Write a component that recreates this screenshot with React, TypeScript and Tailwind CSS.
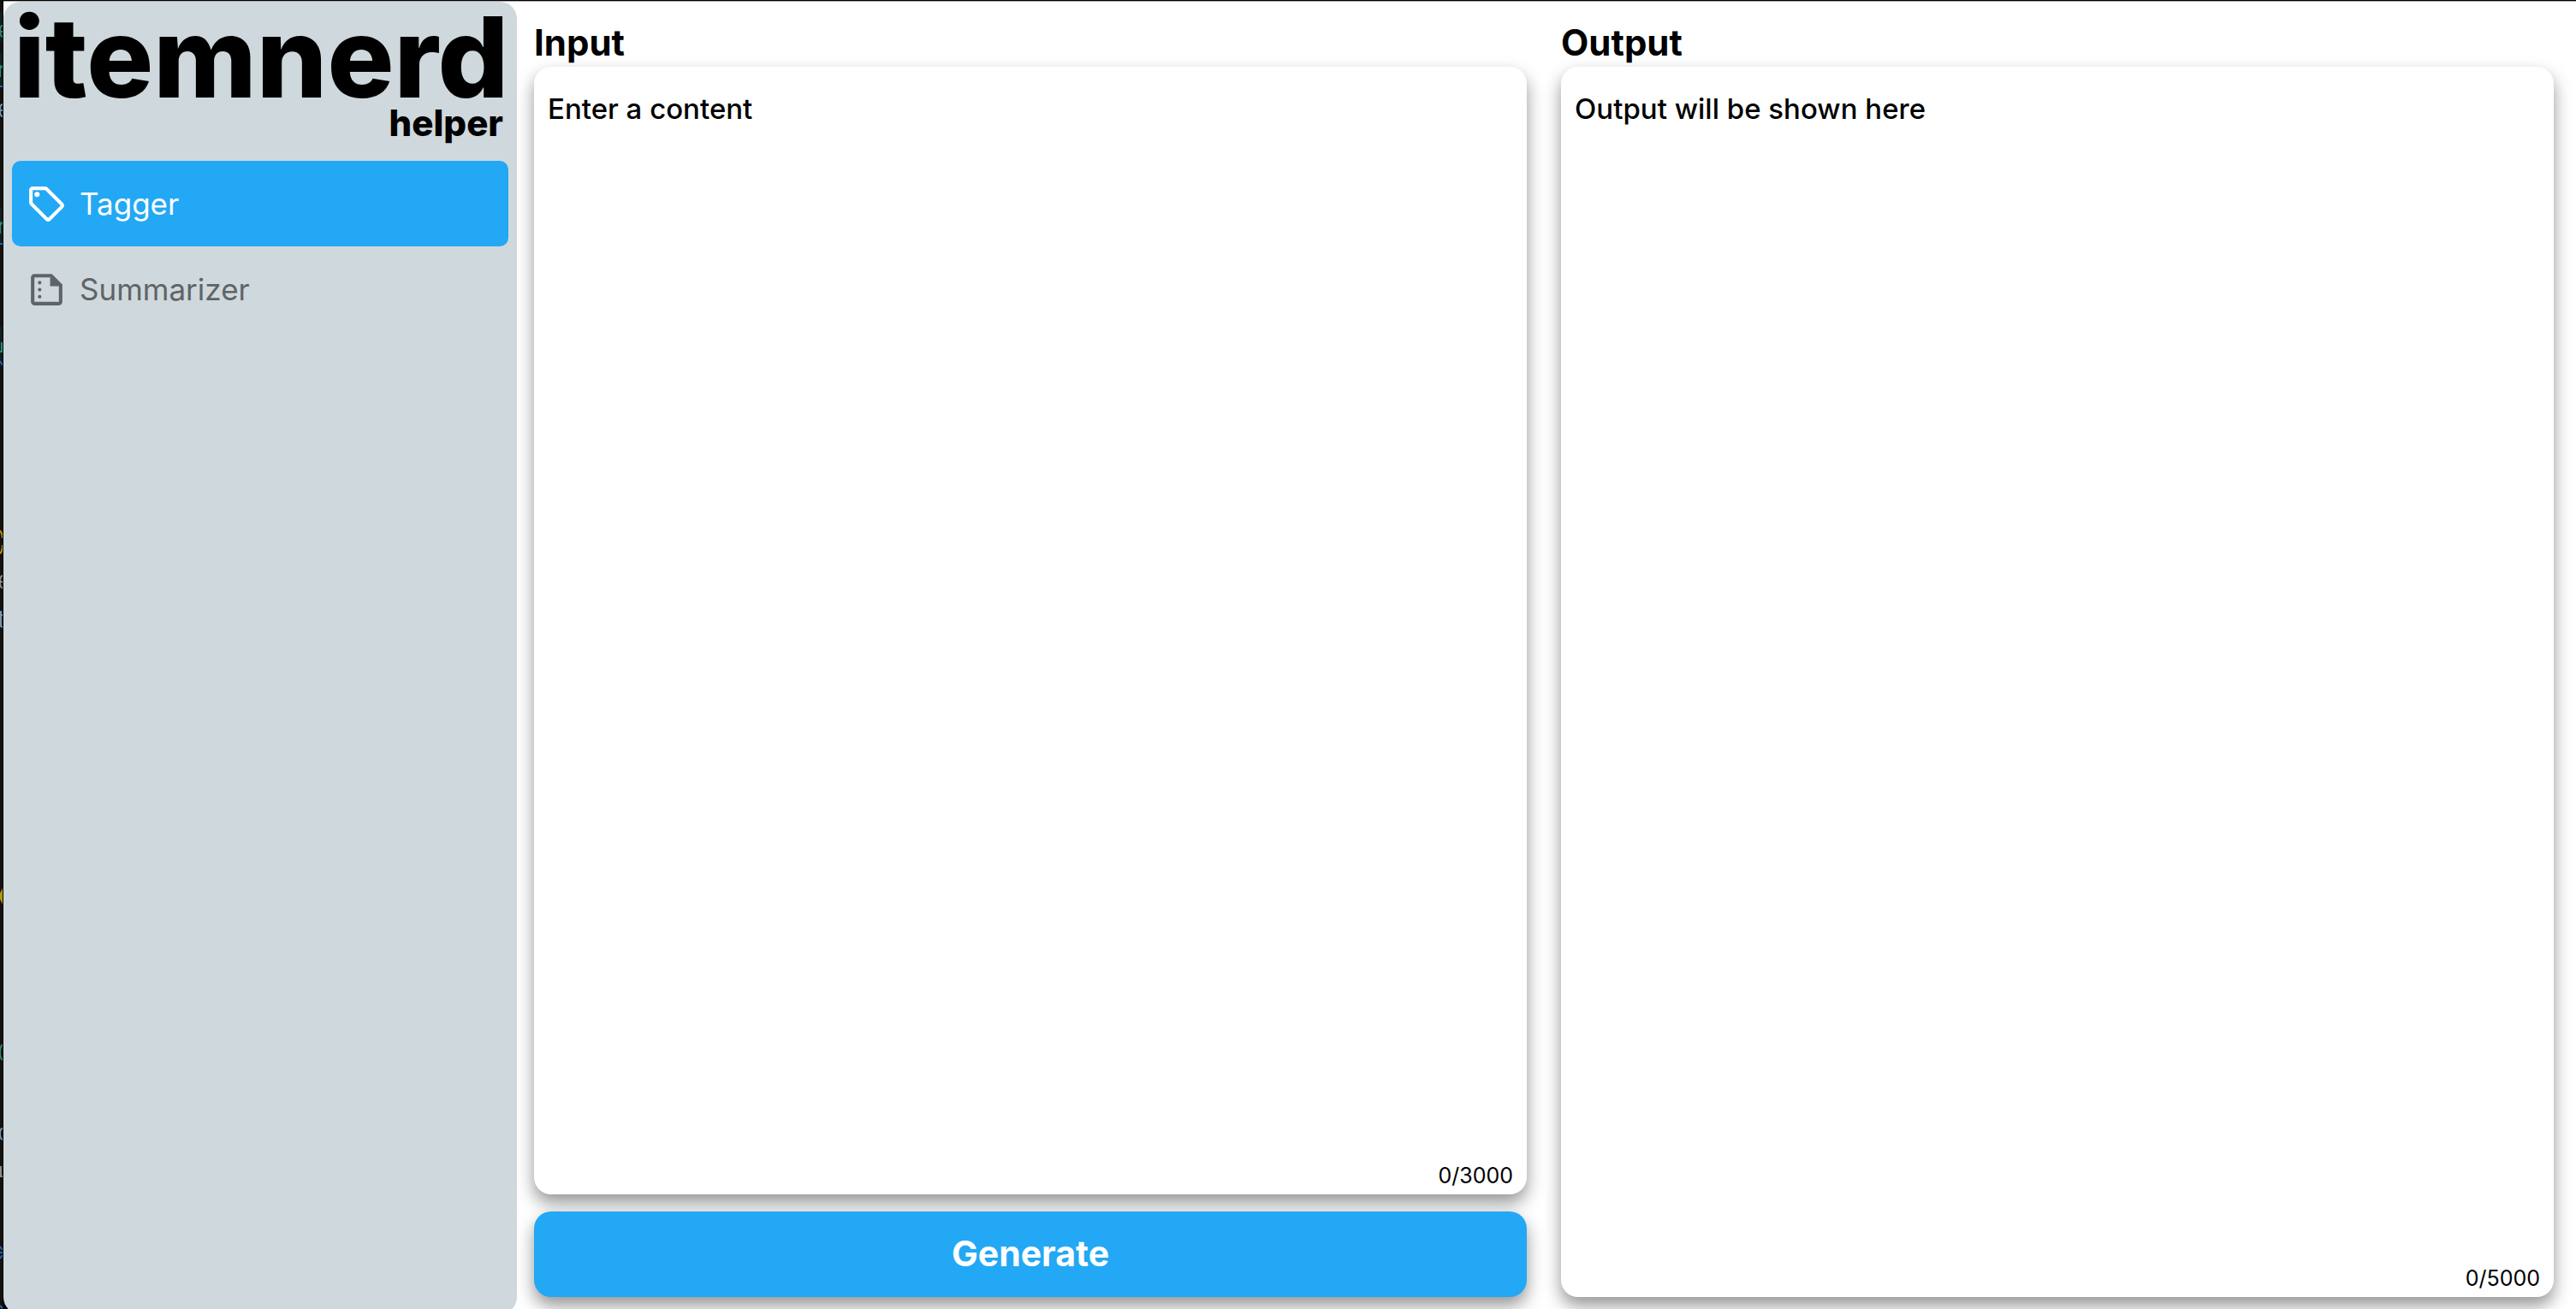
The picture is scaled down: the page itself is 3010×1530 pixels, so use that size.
import { useState } from "react";
import { MdOutlineSell, MdOutlineSummarize } from "react-icons/md";

const tools = [
  { name: "Tagger", Icon: MdOutlineSell },
  { name: "Summarizer", Icon: MdOutlineSummarize },
];

const cardClass =
  "flex min-h-0 flex-1 flex-col rounded-[20px] bg-white px-4 pt-7 pb-1.5 shadow-[0_10px_20px_rgba(0,0,0,0.42)]";

/* Sliver of the editor window that sits behind the app's left edge. */
function EditorSliver() {
  return (
    <svg className="absolute top-0 left-0 h-[1530px] w-[3px]" viewBox="0 0 3 1530" fill="none" aria-hidden="true">
      <path d="M0 14h3v34H0zM0 62h3v40H0zM0 244h3v42H0zM0 382h3v42H0z" fill="#10201f" />
      <g stroke="#2f8a72" strokeWidth="2">
        <path d="M3 30Q0 30 0 36T3 43M0 37h3" />
        <path d="M0 76v14M0 80l3-3" />
        <path d="M0 259v14M0 263l3-3" />
        <path d="M2 400v12M0 411h3" />
        <path d="M3 1221q-3 2-3 9t3 9" />
      </g>
      <g stroke="#2563b8" strokeWidth="2">
        <path d="M0 101h3M0 285h3M0 422l3 5" />
        <path d="M0 1457l3 4M0 1464h3M0 1471l3-4M0 1526l3 3" />
      </g>
      <g stroke="#7796b0" strokeWidth="2">
        <path d="M3 122Q0 122 0 129T3 136M0 129h3" />
        <path d="M1 714v18l2 1M0 719h3" />
        <path d="M3 1319q-3 0-3 6t3 7" />
      </g>
      <path d="M0 620q3 4 3 9M3 637q0 7-3 10" stroke="#b8960c" strokeWidth="2" />
      <path d="M3 1038v19l-3-6v-7z" fill="#b8960c" />
      <path d="M3 673q-3 0-3 7t3 7M0 680h3M1 1363v12M0 1375h3" stroke="#8d8d8d" strokeWidth="2" />
    </svg>
  );
}

export default function App() {
  const [active, setActive] = useState("Tagger");
  const [text, setText] = useState("");

  return (
    <div className="relative flex h-screen overflow-hidden bg-black pt-px pl-1 font-['Inter',sans-serif] text-black">
      <div className="absolute inset-y-0 left-0 w-[3px] bg-[#15110e]">
        <EditorSliver />
      </div>

      <div className="flex min-w-0 flex-1 rounded-bl-[20px] border-t border-[#a8a8a8] bg-white">
        <aside className="-mb-1.5 flex w-[600px] shrink-0 flex-col rounded-[20px] bg-[#cfd8dd] px-2.5 pt-4">
          <div className="flex flex-col pr-1.5 pl-0.5">
            <h1 className="text-[130px] leading-[98px] font-extrabold">itemnerd</h1>
            <p className="mt-1 self-end text-[42px] leading-12 font-extrabold">helper</p>
          </div>
          <nav className="mt-5 flex flex-col">
            {tools.map(({ name, Icon }) => (
              <button
                key={name}
                type="button"
                onClick={() => setActive(name)}
                className={
                  "flex h-[100px] items-center gap-3.5 rounded-[10px] px-4 text-[35px] " +
                  (active === name ? "bg-[#22a8f5] text-white" : "text-[#5f6467]")
                }
              >
                <Icon className="size-[49px]" aria-hidden="true" />
                {name}
              </button>
            ))}
          </nav>
        </aside>

        <main className="grid min-w-0 flex-1 grid-cols-2 gap-10 pt-6 pr-[26px] pb-3.5 pl-5">
          <section className="flex min-h-0 flex-col">
            <h2 className="mb-1 text-[42px] leading-12 font-bold">
              <label htmlFor="content">Input</label>
            </h2>
            <div className={cardClass}>
              <textarea
                id="content"
                maxLength={3000}
                value={text}
                onChange={(e) => setText(e.target.value)}
                placeholder="Enter a content"
                className="min-h-0 flex-1 resize-none bg-transparent text-[33px] leading-[42px] font-medium outline-none placeholder:text-black"
              />
              <p className="text-right text-[25px] leading-8">{text.length}/3000</p>
            </div>
            <button
              type="button"
              className="mt-5 h-[100px] rounded-[20px] bg-[#22a8f5] text-[41px] font-bold text-white shadow-[0_10px_20px_rgba(0,0,0,0.42)]"
            >
              Generate
            </button>
          </section>

          <section className="flex min-h-0 flex-col">
            <h2 className="mb-1 text-[42px] leading-12 font-bold">Output</h2>
            <div className={cardClass}>
              <output className="min-h-0 flex-1 text-[33px] leading-[42px] font-medium">Output will be shown here</output>
              <p className="text-right text-[25px] leading-8">0/5000</p>
            </div>
          </section>
        </main>
      </div>
    </div>
  );
}
